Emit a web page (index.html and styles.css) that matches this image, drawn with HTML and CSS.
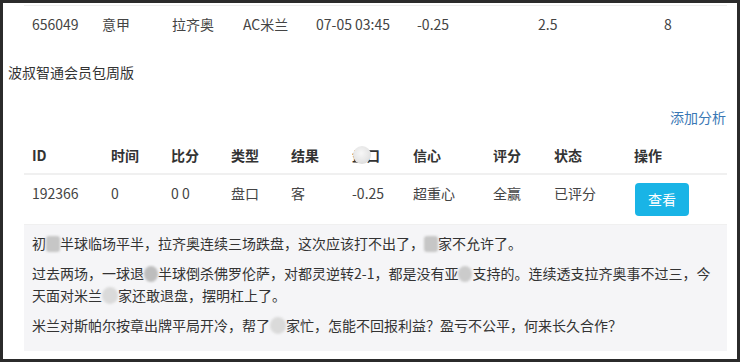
FILE: index.html
```html
<!DOCTYPE html>
<html lang="zh-CN">
<head>
<meta charset="utf-8">
<title>波叔智通会员包周版</title>
<link rel="stylesheet" href="styles.css">
</head>
<body>
<div class="frame">
  <div class="match-row">
    <span>656049</span><span>意甲</span><span>拉齐奥</span><span>AC米兰</span><span>07-05 03:45</span><span>-0.25</span><span>2.5</span><span>8</span>
  </div>
  <div class="title">波叔智通会员包周版</div>
  <div class="add"><a class="add-link">添加分析</a></div>
  <table class="tips">
    <colgroup>
      <col class="c79"><col class="c60"><col class="c60"><col class="c60"><col class="c61"><col class="c61"><col class="c80"><col class="c61"><col class="c80"><col class="c101">
    </colgroup>
    <thead>
      <tr><th>ID</th><th>时间</th><th>比分</th><th>类型</th><th>结果</th><th><span class="masked">盘口<span class="mask"></span></span></th><th>信心</th><th>评分</th><th>状态</th><th>操作</th></tr>
    </thead>
    <tbody>
      <tr><td>192366</td><td>0</td><td>0 0</td><td>盘口</td><td>客</td><td>-0.25</td><td>超重心</td><td>全赢</td><td>已评分</td><td><a class="btn">查看</a></td></tr>
    </tbody>
  </table>
  <div class="analysis">
    <p>初<span class="blot rect"></span>半球临场平半，拉齐奥连续三场跌盘，这次应该打不出了，<span class="blot rect"></span>家不允许了。</p>
    <p>过去两场，一球退<span class="blot dark"></span>半球倒杀佛罗伦萨，对都灵逆转2-1，都是没有亚<span class="blot mid"></span>支持的。连续透支拉齐奥事不过三，今天面对米兰<span class="blot light"></span>家还敢退盘，摆明杠上了。</p>
    <p>米兰对斯帕尔按章出牌平局开冷，帮了<span class="blot light"></span>家忙，怎能不回报利益？盈亏不公平，何来长久合作？</p>
  </div>
</div>
</body>
</html>
```

FILE: styles.css
```css
html, body {
  margin: 0;
  padding: 0;
  background: #2b2b2b;
}
body {
  width: 740px;
  height: 362px;
  overflow: hidden;
  font-family: "Noto Sans CJK SC", "Noto Sans", sans-serif;
  font-size: 14px;
  color: #333;
}
.frame {
  margin: 3px;
  height: 356px;
  padding-top: 2px;
  box-sizing: border-box;
  background: #fff;
  overflow: hidden;
}
.match-row {
  margin: 0 10px 0 21px;
  border-top: 1px solid #eeeeee;
  padding: 8px 0;
  display: grid;
  grid-template-columns: 70px 70px 71px 73px 101px 121px 126px 71px;
  line-height: 20px;
  color: #444;
}
.match-row span {
  padding: 0 8px;
  white-space: nowrap;
}
.title {
  margin-top: 20px;
  padding-left: 5px;
  line-height: 20px;
  color: #333;
}
.add {
  margin-top: 25px;
  padding-right: 11px;
  text-align: right;
  line-height: 20px;
}
.add-link {
  color: #3a78b5;
}
.tips {
  margin: 10px 0 0 21px;
  width: 703px;
  table-layout: fixed;
  border-collapse: collapse;
}
.c79 { width: 79px; }
.c60 { width: 60px; }
.c61 { width: 61px; }
.c80 { width: 80px; }
.c101 { width: 101px; }
.tips th, .tips td {
  padding: 8px;
  line-height: 20px;
  text-align: left;
  vertical-align: top;
  white-space: nowrap;
}
.tips th {
  font-weight: bold;
  color: #333;
  border-bottom: 2px solid #f0f0f0;
}
.tips td {
  color: #444;
  border-bottom: 1px solid #f0f0f0;
}
.masked {
  position: relative;
  display: inline-block;
}
.mask {
  position: absolute;
  left: 1px;
  top: 1px;
  width: 18px;
  height: 18px;
  border-radius: 50%;
  background: radial-gradient(circle at 45% 40%, #f7f7f7 0%, #e6e6e6 55%, #cfcfcf 100%);
  filter: blur(0.6px);
}
.btn {
  display: block;
  width: 54px;
  height: 33px;
  margin-left: 1px;
  border-radius: 4px;
  background: #19b4e6;
  color: #fff;
  text-align: center;
  line-height: 33px;
  font-size: 14px;
}
.analysis {
  margin-left: 21px;
  width: 703px;
  box-sizing: border-box;
  background: #f5f5f7;
  padding: 7px 8px 15px;
  line-height: 22px;
  color: #333;
}
.analysis p {
  margin: 0 0 8px;
}
.analysis p:last-child {
  margin-bottom: 0;
}
.blot {
  display: inline-block;
  width: 14px;
  height: 16px;
  vertical-align: -3px;
  border-radius: 50%;
  filter: blur(0.8px);
}
.blot.rect {
  border-radius: 3px;
  background: #c6c6c6;
}
.blot.dark {
  background: #bdbdbd;
}
.blot.mid {
  background: #cbcbcb;
}
.blot.light {
  width: 16px;
  height: 17px;
  vertical-align: -3px;
  background: #dadada;
}
```
